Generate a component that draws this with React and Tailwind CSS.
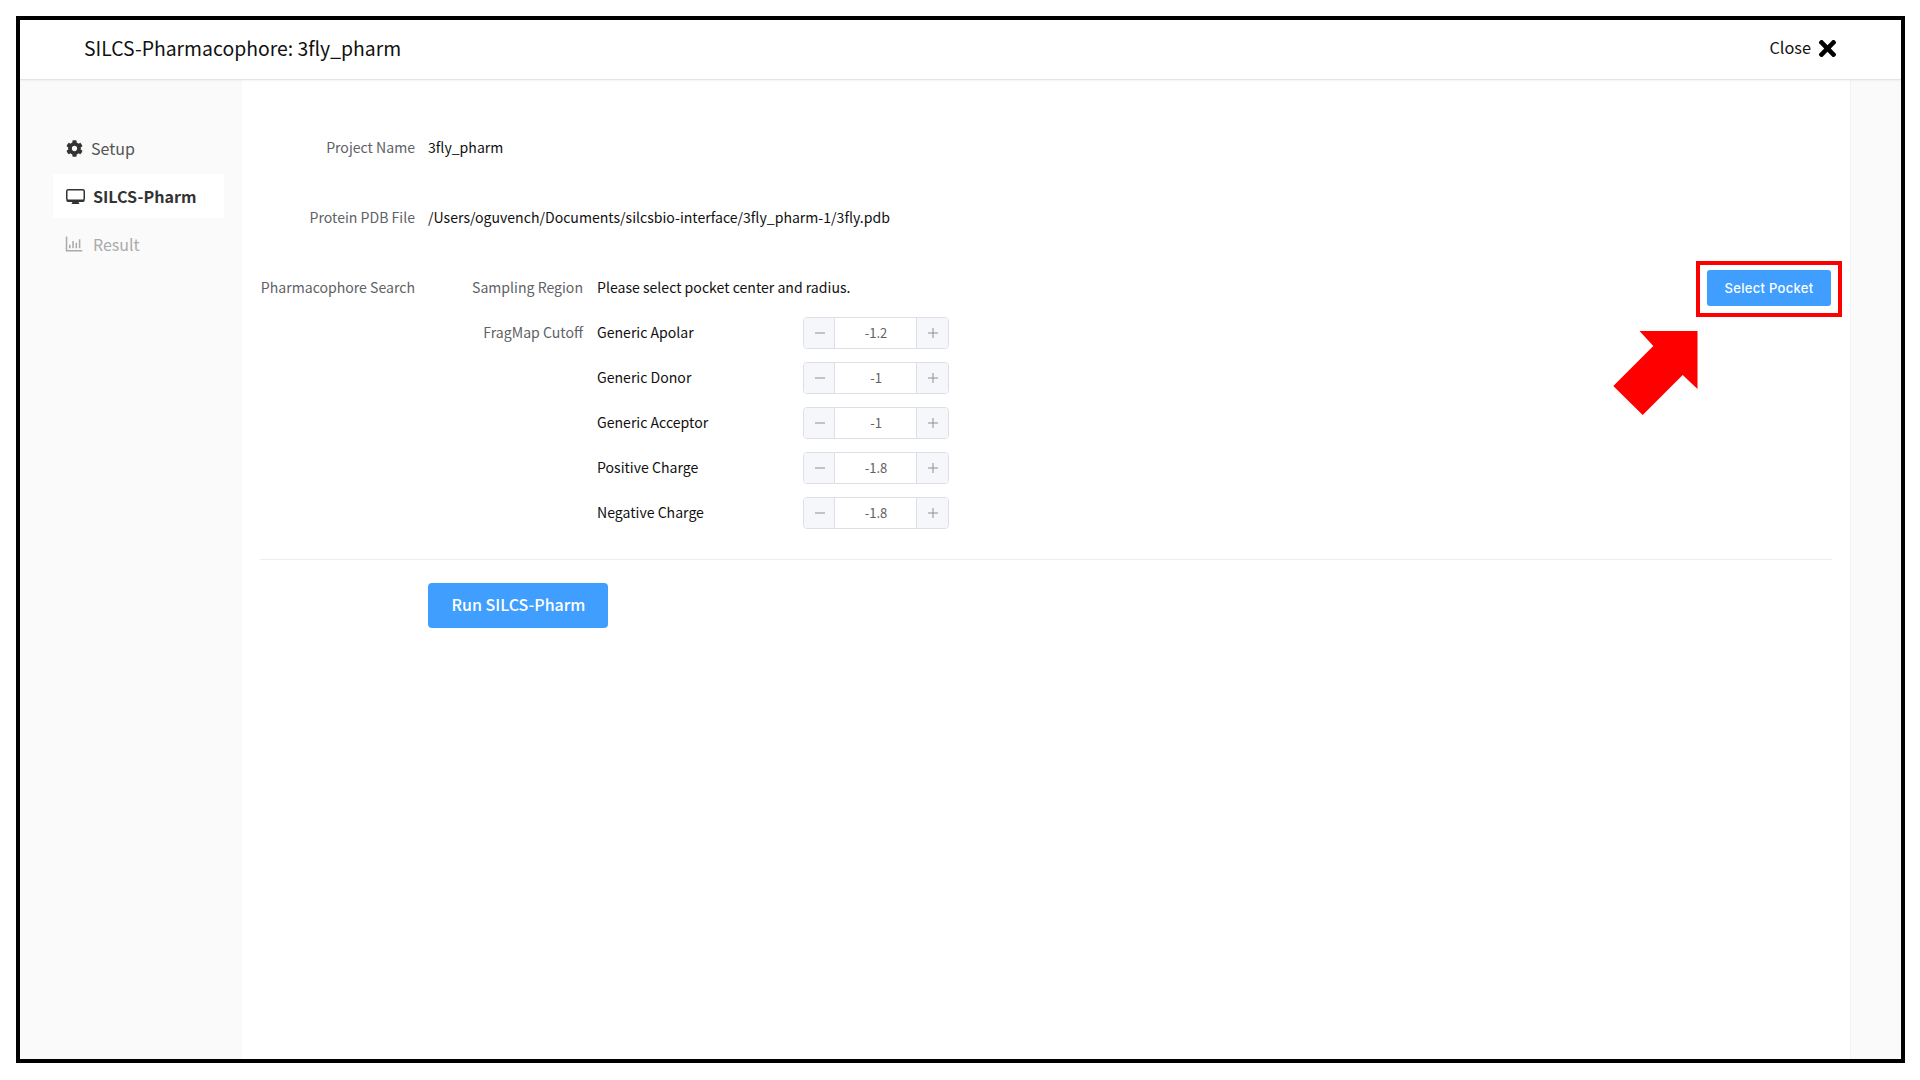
import React from "react";
import { FaCog, FaTimes } from "react-icons/fa";
import { AiOutlineBarChart } from "react-icons/ai";

const font = { fontFamily: '"Noto Sans CJK KR", "Noto Sans", sans-serif' };

function Stepper({ value }) {
  return (
    <div className="flex h-8 w-[146px] rounded border border-[#dcdfe6] text-[13px] text-[#606266] overflow-hidden">
      <div className="w-[31px] pl-px flex items-center justify-center bg-[#f5f7fa] border-r border-[#dcdfe6]">
        <svg width="12" height="12" viewBox="0 0 12 12"><path d="M1 6h10" stroke="#8c8f96" strokeWidth="1" /></svg>
      </div>
      <div className="flex-1 pl-px pb-[1px] flex items-center justify-center bg-white">{value}</div>
      <div className="w-[32px] pl-px flex items-center justify-center bg-[#f5f7fa] border-l border-[#dcdfe6]">
        <svg width="12" height="12" viewBox="0 0 12 12"><path d="M1 6h10M6 1v10" stroke="#8c8f96" strokeWidth="1" /></svg>
      </div>
    </div>
  );
}

function FragRow({ label, value, head }) {
  return (
    <div className="flex items-center h-8">
      <div className="w-[155px] pb-[1px] text-right text-[#606266]">{head}</div>
      <div className="w-[206px] pb-[1px] ml-[14px] text-[#111]">{label}</div>
      <Stepper value={value} />
    </div>
  );
}

export default function App() {
  return (
    <div className="relative w-[1920px] h-[1080px] bg-white p-4 text-[14.08px]" style={font}>
      <div className="w-[1889px] h-[1047px] border-4 border-black flex flex-col overflow-hidden">
        <header className="h-[60px] shrink-0 flex items-center justify-between pl-[64px] pr-[61px] bg-white border-b border-[#e4e4e4] shadow-[0_1px_2px_rgba(0,0,0,0.05)] z-10">
          <div className="text-[19.4px] pb-[4px] text-[#111]">SILCS-Pharmacophore: 3fly_pharm</div>
          <div className="flex items-center gap-[4px] text-[16.3px] text-[#111] pb-[2px]">
            <span className="pb-[2px]">Close</span>
            <FaTimes className="text-[25px] text-black" />
          </div>
        </header>
        <div className="flex flex-1 min-h-0">
          <aside className="w-[222px] shrink-0 bg-[#fafafa] pt-[46px] pl-[33px] pr-[18px] text-base">
            <div className="h-11 flex items-center gap-[8px] pl-[13px] text-[#555]">
              <FaCog className="text-[17px] text-[#333]" />
              <span>Setup</span>
            </div>
            <div className="h-11 mt-1 flex items-center gap-[8px] pl-[13px] bg-white font-bold text-[#333] text-[16.1px]">
              <svg width="19" height="15" viewBox="0 0 19 15" className="shrink-0">
                <rect x="0.75" y="0.75" width="17.5" height="10.5" rx="1.5" fill="none" stroke="#333" strokeWidth="1.5" />
                <path d="M0.5 11h18v0.5a1.5 1.5 0 0 1-1.5 1.5H2a1.5 1.5 0 0 1-1.5-1.5z M6.5 13h6l1 2h-8z" fill="#333" />
              </svg>
              <span>SILCS-Pharm</span>
            </div>
            <div className="h-11 mt-1 flex items-center gap-[8px] pl-[10px] text-[#aaa]">
              <AiOutlineBarChart className="text-[22px]" />
              <span>Result</span>
            </div>
          </aside>
          <main className="w-[1608px] shrink-0 bg-white pl-[18px] pr-[18px] pt-[52px]">
            <div className="flex items-center h-8 mb-[38px]">
              <div className="w-[155px] pb-[1px] text-right text-[#606266]">Project Name</div>
              <div className="ml-[13px] pb-[1px] text-[#111]">3fly_pharm</div>
            </div>
            <div className="flex items-center h-8 mb-[38px]">
              <div className="w-[155px] pb-[1px] text-right text-[#606266]">Protein PDB File</div>
              <div className="ml-[13px] pb-[1px] text-[#111]">/Users/oguvench/Documents/silcsbio-interface/3fly_pharm-1/3fly.pdb</div>
            </div>
            <div className="flex">
              <div className="w-[155px] h-8 pb-[1px] flex items-center justify-end text-[#606266] whitespace-nowrap">Pharmacophore Search</div>
              <div className="ml-[13px] flex-1 flex flex-col gap-[13px]">
                <div className="flex items-center h-8">
                  <div className="w-[155px] pb-[1px] text-right text-[#606266]">Sampling Region</div>
                  <div className="ml-[14px] pb-[1px] text-[#111]">Please select pocket center and radius.</div>
                  <button className="ml-auto mr-px h-9 w-[124px] pt-px rounded-[3px] bg-[#409eff] text-white text-[13px] font-medium tracking-[0.3px]" style={{ fontFamily: 'Inter, sans-serif' }}>Select Pocket</button>
                </div>
                <FragRow head="FragMap Cutoff" label="Generic Apolar" value="-1.2" />
                <FragRow label="Generic Donor" value="-1" />
                <FragRow label="Generic Acceptor" value="-1" />
                <FragRow label="Positive Charge" value="-1.8" />
                <FragRow label="Negative Charge" value="-1.8" />
              </div>
            </div>
            <div className="h-px bg-[#ebeef5] mt-[30px]" />
            <div className="mt-[23px] pl-[168px]">
              <button className="h-[45px] w-[180px] pb-[3px] pl-px rounded bg-[#409eff] text-white text-base font-medium">Run SILCS-Pharm</button>
            </div>
          </main>
          <div className="flex-1 bg-[#fafafa] border-l border-[#f2f2f2]" />
        </div>
      </div>
      <div className="absolute left-[1696px] top-[261px] w-[146px] h-[56px] border-4 border-[#ff0000]" />
      <svg className="absolute left-[1610px] top-[328px]" width="90" height="90" viewBox="1610 328 90 90">
        <polygon points="1639.5,331 1697.5,331 1697.5,389 1682.7,375 1642.7,415 1613.3,386 1653.3,346" fill="#ff0000" />
      </svg>
    </div>
  );
}
